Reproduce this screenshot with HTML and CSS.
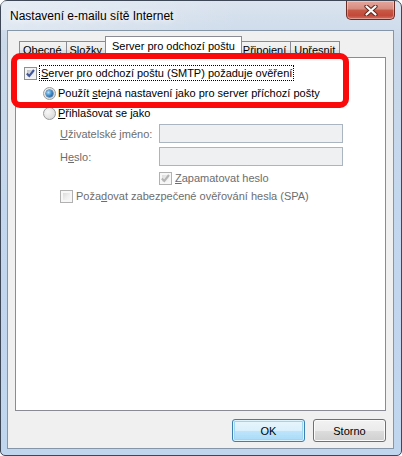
FILE: index.html
```html
<!DOCTYPE html>
<html lang="cs">
<head>
<meta charset="utf-8">
<title>Nastavení e-mailu sítě Internet</title>
<link rel="stylesheet" href="styles.css">
</head>
<body>
<div class="window">
  <div class="titlebar">
    <span class="title">Nastavení e-mailu sítě Internet</span>
    <div class="close" aria-label="Zavřít">
      <svg width="14" height="11" viewBox="0 0 14 11"><path d="M2.5 1.5 L11.5 9.5 M11.5 1.5 L2.5 9.5" stroke="#5a2a22" stroke-width="4.2" stroke-linecap="round"/><path d="M2.5 1.5 L11.5 9.5 M11.5 1.5 L2.5 9.5" stroke="#ffffff" stroke-width="2.2" stroke-linecap="round"/></svg>
    </div>
  </div>
  <div class="client">
    <div class="tabctl">
      <div class="tabstrip">
        <div class="tab">Obecné</div>
        <div class="tab">Složky</div>
        <div class="tab selected">Server pro odchozí poštu</div>
        <div class="tab">Připojení</div>
        <div class="tab">Upřesnit</div>
      </div>
      <div class="panel">
        <div class="row row-auth">
          <span class="cb">
            <svg viewBox="0 0 13 13" width="13" height="13"><path d="M2.8 6.4 L5.3 9 L10 3" fill="none" stroke="#42569a" stroke-width="2.1"/></svg>
          </span>
          <span class="focus"><u>S</u>erver pro odchozí poštu (SMTP) požaduje ověření</span>
        </div>
        <div class="row row-radio">
          <span class="rb on"></span>
          <span class="lbl">Použít <u>s</u>tejná nastavení jako pro server příchozí pošty</span>
        </div>
        <div class="row row-radio">
          <span class="rb"></span>
          <span class="lbl"><u>P</u>řihlašovat se jako</span>
        </div>
        <div class="row row-field">
          <span class="flabel"><u>U</u>živatelské jméno:</span>
          <span class="textbox"></span>
        </div>
        <div class="row row-field row-field2">
          <span class="flabel">H<u>e</u>slo:</span>
          <span class="textbox"></span>
        </div>
        <div class="row row-remember">
          <span class="cb disabled">
            <svg viewBox="0 0 13 13" width="13" height="13"><path d="M2.8 6.4 L5.3 9 L10 3" fill="none" stroke="#b4b4b4" stroke-width="2.1"/></svg>
          </span>
          <span class="lbl dim"><u>Z</u>apamatovat heslo</span>
        </div>
        <div class="row row-spa">
          <span class="cb disabled"></span>
          <span class="lbl dim">Poža<u>d</u>ovat zabezpečené ověřování hesla (SPA)</span>
        </div>
      </div>
      <div class="annot"></div>
    </div>
    <div class="buttons">
      <div class="btn default">OK</div>
      <div class="btn">Storno</div>
    </div>
  </div>
</div>
</body>
</html>
```

FILE: styles.css
```css
* { box-sizing: border-box; }
html, body { margin: 0; padding: 0; }
body {
  width: 402px;
  height: 456px;
  overflow: hidden;
  background: #ffffff;
  font-family: "Liberation Sans", Arial, sans-serif;
  font-size: 11px;
  color: #000;
}
u { text-decoration: underline; text-underline-offset: 1px; }

.window {
  width: 402px;
  height: 456px;
  border: 1px solid #3d4755;
  border-radius: 7px 7px 5px 5px;
  background: linear-gradient(to bottom, #dbe4ef 0, #cbd9ea 40px, #c3d7ee 200px, #c0d6ef 100%);
  padding: 0 7px 6px 6px;
  display: flex;
  flex-direction: column;
}

.titlebar {
  height: 29px;
  display: flex;
  justify-content: space-between;
  align-items: center;
  background: linear-gradient(to right, rgba(255,255,255,0.35), rgba(255,255,255,0) 60%);
  margin: 0 -7px 0 -6px;
  padding: 0 6px 0 9px;
}
.title {
  font-size: 12px;
  text-shadow: 0 0 6px #fff, 0 0 10px #fff;
  color: #000;
}
.close {
  align-self: flex-start;
  width: 49px;
  height: 19px;
  border: 1px solid #6b2c24;
  border-top: 0;
  border-radius: 0 0 5px 5px;
  background: linear-gradient(to bottom, #e3a79d 0%, #d88b7f 45%, #c75a48 50%, #c4483a 80%, #d2705e 100%);
  box-shadow: inset 0 0 0 1px rgba(255,255,255,0.35);
  display: flex;
  align-items: center;
  justify-content: center;
}

.client {
  flex: 1;
  border: 1px solid #8696a9;
  background: #f0f0f0;
  padding: 5px 7px 6px 7px;
  display: flex;
  flex-direction: column;
}

.tabctl {
  position: relative;
  display: flex;
  flex-direction: column;
}
.tabstrip {
  height: 21px;
  display: flex;
  align-items: flex-end;
  padding-left: 4px;
}
.tab {
  height: 16px;
  border: 1px solid #898c95;
  border-bottom: 0;
  margin-left: -1px;
  padding: 0 4px 0 3px;
  background: linear-gradient(to bottom, #f3f3f3 0%, #ececec 50%, #dfdfdf 51%, #d5d5d5 100%);
  display: flex;
  align-items: center;
  white-space: nowrap;
  color: #000;
}
.tab:first-child { margin-left: 0; }
.tab.selected {
  height: 22px;
  margin: 0 -2px -1px -2px;
  padding: 0 6px 4px 6px;
  background: #ffffff;
  position: relative;
  z-index: 1;
}

.panel {
  height: 354px;
  border: 1px solid #898c95;
  background: #ffffff;
  display: flex;
  flex-direction: column;
}

.row {
  display: flex;
  align-items: center;
  height: 16px;
  white-space: nowrap;
}
.row-auth { margin-top: 7px; padding-left: 8px; }
.row-radio { margin-top: 4px; padding-left: 27px; }
.row-field { margin-top: 3px; height: 19px; padding-left: 44px; }
.row-field2 { margin-top: 4px; }
.row-remember { margin-top: 4px; padding-left: 143px; }
.row-spa { margin-top: 2px; padding-left: 44px; }

.focus {
  margin-left: 2px;
  height: 16px;
  padding: 0 1px;
  border: 1px dotted #000;
  display: flex;
  align-items: center;
}
.lbl { margin-left: 2px; }
.row-remember .lbl, .row-spa .lbl { margin-left: 3px; }
.dim { color: #6d6d6d; }

.flabel {
  width: 99px;
  color: #6d6d6d;
}
.textbox {
  width: 184px;
  height: 19px;
  border: 1px solid #abb5c2;
  background: #eff0f2;
}

.cb {
  position: relative;
  width: 13px;
  height: 13px;
  flex: none;
  border: 1px solid #8e8f8f;
  padding: 2px;
  background: linear-gradient(135deg, #b9bdc2 0%, #e6e7e9 60%, #f5f5f6 100%) content-box, #f4f4f4;
}
.cb svg {
  position: absolute;
  left: -1px;
  top: -1px;
}
.cb.disabled {
  border-color: #b1b1b1;
  background: linear-gradient(135deg, #dcdcdc 0%, #efefef 60%, #f7f7f7 100%) content-box, #f7f7f7;
}

.rb {
  position: relative;
  width: 13px;
  height: 13px;
  flex: none;
  border-radius: 50%;
  border: 1px solid #9a9b9c;
  background: radial-gradient(circle at 35% 35%, #f8f8f8 0%, #e4e4e4 55%, #cfd0d1 100%);
}
.rb.on::after {
  content: "";
  position: absolute;
  left: 2px;
  top: 2px;
  width: 7px;
  height: 7px;
  border-radius: 50%;
  background: radial-gradient(circle at 35% 35%, #b5e3fa 0%, #4c9bd6 40%, #1c5a9c 80%, #184c86 100%);
  box-shadow: 0 0 0 0.5px #1d4f86;
}

.annot {
  position: absolute;
  left: -4px;
  top: 17px;
  width: 338px;
  height: 55px;
  border: 6px solid #fa0a0a;
  border-radius: 9px;
  z-index: 5;
  pointer-events: none;
}

.buttons {
  margin-top: 8px;
  display: flex;
  justify-content: flex-end;
  gap: 8px;
}
.btn {
  width: 73px;
  height: 23px;
  border: 1px solid #707070;
  border-radius: 3px;
  background: linear-gradient(to bottom, #f2f2f2 0%, #ebebeb 50%, #dddddd 51%, #cfcfcf 100%);
  box-shadow: inset 0 0 0 1px #fbfbfb;
  display: flex;
  align-items: center;
  justify-content: center;
  color: #000;
}
.btn.default {
  border-color: #3c7fb1;
  background: linear-gradient(to bottom, #eaf6fd 0%, #d9f0fc 50%, #bee6fd 51%, #a7d9f5 100%);
  box-shadow: inset 0 0 0 1px #ddf3fd, inset 0 0 0 2px #9fd5f3;
}
```
